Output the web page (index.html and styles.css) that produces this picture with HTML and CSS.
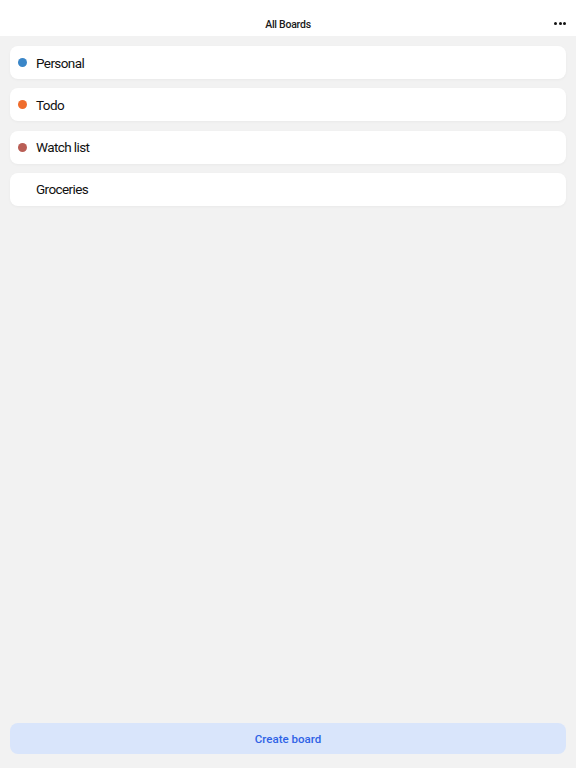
FILE: index.html
```html
<!DOCTYPE html>
<html>
<head>
<meta charset="utf-8">
<link rel="stylesheet" href="styles.css">
</head>
<body>
<div class="app">
  <header class="topbar">
    <div class="title">All Boards</div>
    <div class="more"><span></span><span></span><span></span></div>
  </header>
  <main class="list">
    <div class="card"><span class="dot blue"></span><span class="name">Personal</span></div>
    <div class="card"><span class="dot orange"></span><span class="name">Todo</span></div>
    <div class="card"><span class="dot red"></span><span class="name">Watch list</span></div>
    <div class="card"><span class="dot none"></span><span class="name">Groceries</span></div>
  </main>
  <footer class="bottom">
    <button class="create">Create board</button>
  </footer>
</div>
</body>
</html>
```
FILE: styles.css
```css
html, body {
  margin: 0;
  padding: 0;
  background: #f2f2f2;
  font-family: Roboto, "Noto Sans", sans-serif;
}
.app {
  height: 768px;
  display: flex;
  flex-direction: column;
}
.topbar {
  height: 36px;
  background: #ffffff;
  display: flex;
  align-items: center;
  justify-content: center;
  position: relative;
  flex-shrink: 0;
}
.title {
  font-size: 10.5px;
  font-weight: 500;
  color: #1a1a1a;
  padding-top: 12px;
  letter-spacing: -0.25px;
}
.more {
  position: absolute;
  right: 10px;
  top: 22px;
  display: flex;
  gap: 1.5px;
}
.more span {
  width: 3px;
  height: 3px;
  border-radius: 50%;
  background: #111;
}
.list {
  flex: 1;
  padding: 10px 10px 0 10px;
  display: flex;
  flex-direction: column;
  gap: 9.3px;
}
.card {
  height: 33px;
  background: #ffffff;
  border-radius: 8px;
  display: flex;
  align-items: center;
  padding-left: 8px;
  box-shadow: 0 1px 3px rgba(0,0,0,0.04);
}
.dot {
  width: 9px;
  height: 9px;
  border-radius: 50%;
  margin-right: 9px;
  flex-shrink: 0;
}
.dot.blue { background: #3a86c8; }
.dot.orange { background: #ef6c2c; }
.dot.red { background: #b95e55; }
.dot.none { background: transparent; }
.name {
  font-size: 13.5px;
  color: #111;
  letter-spacing: -0.6px;
}
.bottom {
  padding: 0 10px 14px 10px;
}
.create {
  width: 100%;
  height: 31px;
  border: none;
  border-radius: 8px;
  background: #d9e5fb;
  color: #2f62e6;
  font-family: Roboto, "Noto Sans", sans-serif;
  font-size: 11.5px;
  font-weight: 500;
}
```
